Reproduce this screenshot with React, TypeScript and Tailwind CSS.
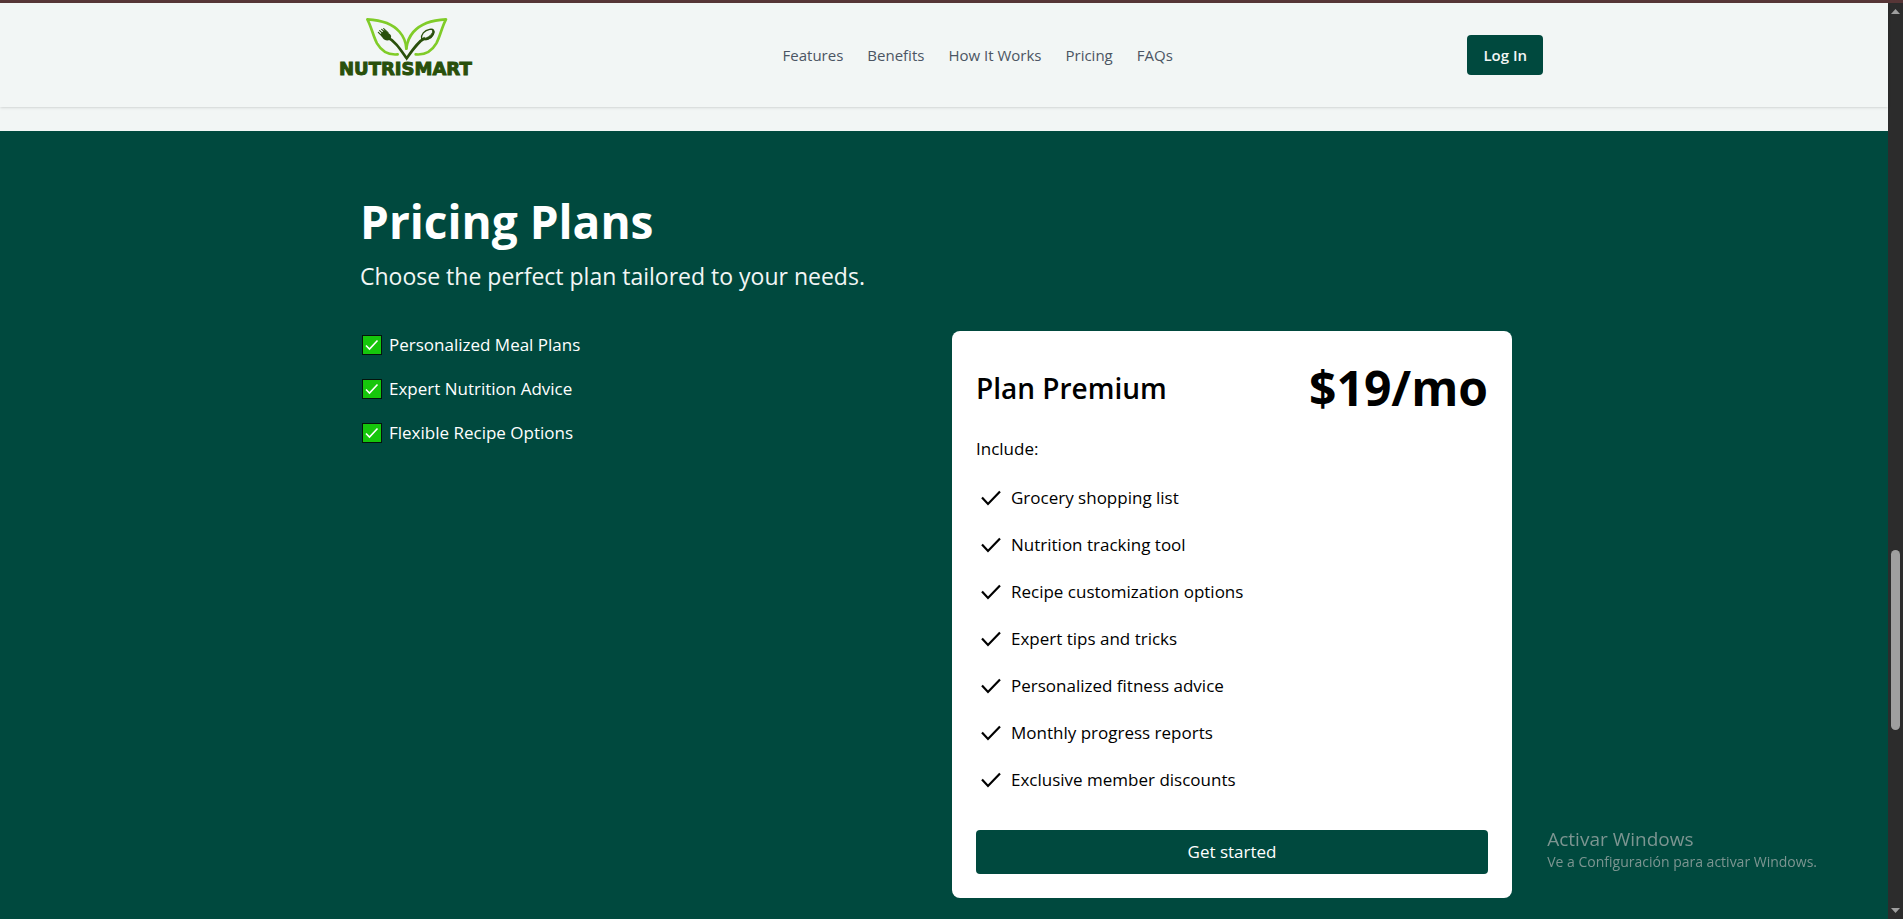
import React from "react";

const navLinks = ["Features", "Benefits", "How It Works", "Pricing", "FAQs"];

const highlights = [
  "Personalized Meal Plans",
  "Expert Nutrition Advice",
  "Flexible Recipe Options",
];

const planFeatures = [
  "Grocery shopping list",
  "Nutrition tracking tool",
  "Recipe customization options",
  "Expert tips and tricks",
  "Personalized fitness advice",
  "Monthly progress reports",
  "Exclusive member discounts",
];

function Logo() {
  return (
    <a href="#home" className="flex w-[149px] flex-col pb-[17px]">
      <svg viewBox="60 48 405 135" className="h-[45px] w-[135px]" fill="none" aria-hidden="true">
        <g stroke="#80cc28" strokeWidth="8" strokeLinecap="round" strokeLinejoin="round">
          <path d="M236 163C206 166 188 154 174 130C162 108 158 82 145 58C186 60 222 72 242 96C255 111 261 126 262 146" />
          <path d="M290 163C320 166 338 154 352 130C364 108 368 82 381 58C340 60 304 72 283 96C270 111 264 126 262 146" />
        </g>
        <path
          d="M204 112C228 122 244 148 263 175C282 148 298 124 318 114"
          stroke="#29500b"
          strokeWidth="8"
          strokeLinejoin="miter"
        />
        <path d="M184 103L196 90L213 103C219 109 216 115 212 120C203 123 195 120 191 114Z" fill="#29500b" />
        <g stroke="#29500b" strokeWidth="3.5" strokeLinecap="round">
          <path d="M178 97L190 109M182 92L195 104M188 88L201 99M194 86L207 98" />
        </g>
        <path
          d="M308 117C305 104 316 91 332 88C344 86 348 93 343 103C337 115 322 123 308 117Z"
          stroke="#29500b"
          strokeWidth="4"
        />
        <path
          d="M308 117C322 123 337 115 343 103C346 97 345 91 341 89C344 100 330 115 308 117Z"
          fill="#29500b"
          stroke="#29500b"
          strokeWidth="3"
        />
      </svg>
      <span className="font-['DejaVu_Sans',sans-serif] text-[18px] leading-4 font-bold text-[#29500b] [-webkit-text-stroke:1px_#29500b]">
        NUTRISMART
      </span>
    </a>
  );
}

function Header() {
  return (
    <header className="relative bg-[#f2f6f5] py-[13px] pr-[22px] pl-4 shadow">
      <div className="mx-auto flex max-w-[1204px] items-center justify-between">
        <Logo />
        <nav className="flex gap-6 text-[15px] leading-6 text-[#4b5563]">
          {navLinks.map((label) => (
            <a key={label} href={`#${label.toLowerCase().replace(/ /g, "-")}`}>
              {label}
            </a>
          ))}
        </nav>
        <button type="button" className="rounded bg-[#00493e] px-4 py-2 text-[15px] leading-6 font-semibold text-[#f2f6f5]">
          Log In
        </button>
      </div>
    </header>
  );
}

function CheckBadge() {
  return (
    <svg viewBox="0 0 20 20" className="size-5 shrink-0" aria-hidden="true">
      <rect x="0.5" y="0.5" width="19" height="19" fill="#16c60c" stroke="#04140c" />
      <path d="M4 10.5L7.5 14L15.5 5.5" fill="none" stroke="#fff" strokeWidth="1.6" />
    </svg>
  );
}

function CheckMark() {
  return (
    <svg viewBox="0 0 20 16" className="h-4 w-5 shrink-0" aria-hidden="true">
      <path d="M1 7.500L7 14L19 1.500" fill="none" stroke="#000" strokeWidth="2.200" />
    </svg>
  );
}

function PlanCard() {
  return (
    <article className="rounded-lg bg-white p-6 text-black">
      <div className="flex items-center justify-between py-2">
        <h2 className="text-[28px] leading-8 font-semibold">Plan Premium</h2>
        <p className="text-[48px] leading-[50px] font-bold">$19/mo</p>
      </div>
      <p className="mt-3.5 text-[17px] leading-7">Include:</p>
      <ul className="mt-[11px]">
        {planFeatures.map((feature) => (
          <li key={feature} className="flex items-center gap-2.5 py-[10px] pl-[5px] text-[17px] leading-[27px]">
            <CheckMark />
            {feature}
          </li>
        ))}
      </ul>
      <button
        type="button"
        className="mt-[27px] w-full rounded bg-[#00493e] px-4 py-2 text-[17px] leading-7 text-white"
      >
        Get started
      </button>
    </article>
  );
}

function Pricing() {
  return (
    <section id="pricing" className="mt-6 flex-1 bg-[#00493e] px-4 pt-16 pb-5 text-white">
      <div className="mx-auto max-w-[1168px]">
        <h1 className="text-[46px] leading-[52px] font-bold">Pricing Plans</h1>
        <p className="mt-[11px] text-[23px] leading-9 text-[#f2f6f5]">
          Choose the perfect plan tailored to your needs.
        </p>
        <div className="mt-[37px] grid grid-cols-2 gap-8 pr-4">
          <ul>
            {highlights.map((item) => (
              <li key={item} className="flex items-center gap-[7px] pb-4 pl-0.5 text-[17px] leading-7">
                <CheckBadge />
                {item}
              </li>
            ))}
          </ul>
          <PlanCard />
        </div>
      </div>
    </section>
  );
}

function ScrollRail() {
  return (
    <div className="flex w-[15px] shrink-0 flex-col items-center bg-[#2c2c2c] py-1.5" aria-hidden="true">
      <svg viewBox="0 0 9 5" className="h-[5px] w-[9px]">
        <path d="M4.500 0L9 5H0Z" fill="#9f9f9f" />
      </svg>
      <div className="grow-[537]" />
      <div className="w-[9px] grow-[181] rounded-full bg-[#9f9f9f]" />
      <div className="grow-[178]" />
      <svg viewBox="0 0 9 5" className="h-[5px] w-[9px]">
        <path d="M4.500 5L9 0H0Z" fill="#9f9f9f" />
      </svg>
    </div>
  );
}

function ActivationNotice() {
  return (
    <div className="pointer-events-none fixed right-[86px] bottom-12 text-[#7c9591]">
      <p className="text-[19px] leading-7">Activar Windows</p>
      <p className="text-[14px] leading-[18px]">Ve a Configuración para activar Windows.</p>
    </div>
  );
}

export default function App() {
  return (
    <div className="flex min-h-screen flex-col bg-[#f2f6f5] font-['Open_Sans','Noto_Sans',sans-serif]">
      <div className="h-[3px] bg-[#573637]" />
      <div className="flex flex-1">
        <main className="flex min-w-0 flex-1 flex-col">
          <Header />
          <Pricing />
        </main>
        <ScrollRail />
      </div>
      <ActivationNotice />
    </div>
  );
}
